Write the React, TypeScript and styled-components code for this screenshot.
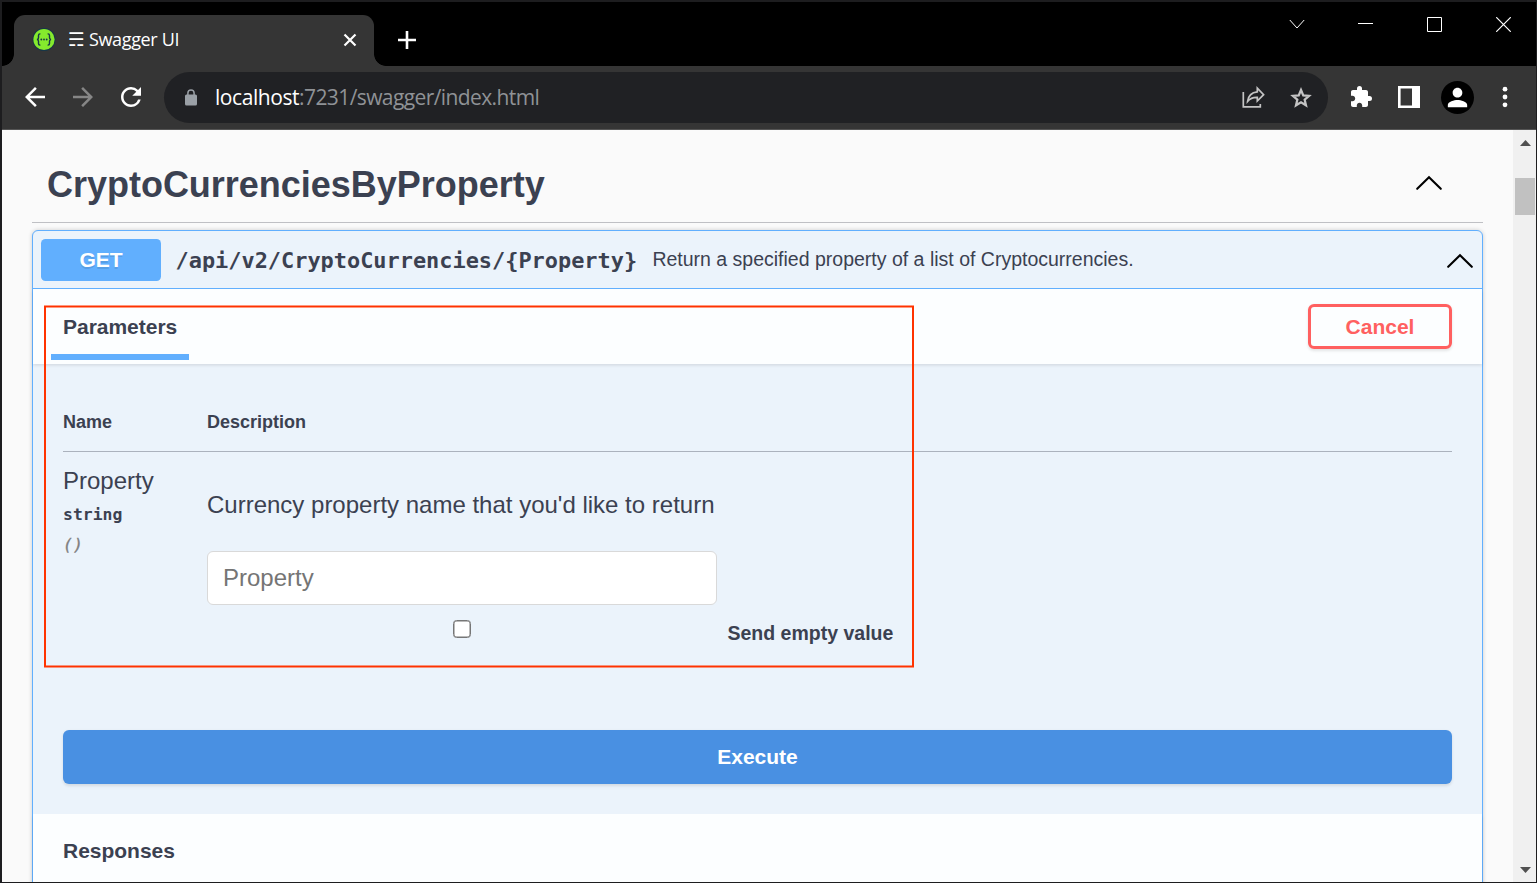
import React from "react";
import styled, { createGlobalStyle, css } from "styled-components";
import { MdArrowBack, MdArrowForward, MdExtension, MdPerson, MdRefresh } from "react-icons/md";

const GlobalStyle = createGlobalStyle`
  *, *::before, *::after { box-sizing: border-box; }
  body { margin: 0; background: #1d1d1d; font-family: "Liberation Sans", Arial, sans-serif; color: #3b4151; }
  svg { display: block; flex: none; }
`;

const Window = styled.div`
  width: 1537px;
  height: 883px;
  padding: 2px 1px 1px 2px;
  background: #1d1d1f;
  display: flex;
  flex-direction: column;
  overflow: hidden;
`;

/* Browser frame */

const TitleBar = styled.header`
  height: 64px;
  flex: none;
  display: flex;
  background: #000;
  color: #fff;
`;

const Tab = styled.div`
  position: relative;
  width: 360px;
  height: 51px;
  margin: 13px 0 0 12px;
  padding: 0 16px 1px 18px;
  border-radius: 11px 11px 0 0;
  background: #353535;
  display: flex;
  align-items: center;

  &::before,
  &::after {
    content: "";
    position: absolute;
    bottom: 0;
    width: 12px;
    height: 12px;
  }
  &::before {
    left: -12px;
    background: radial-gradient(circle at 0 0, #000 11.5px, #353535 12.2px);
  }
  &::after {
    right: -12px;
    background: radial-gradient(circle at 100% 0, #000 11.5px, #353535 12.2px);
  }
`;

const TabTitle = styled.span`
  display: flex;
  align-items: center;
  flex: 1;
  margin-left: 12px;
  padding-bottom: 2px;
  font: 18px/24px "Open Sans", "Noto Sans", sans-serif;
  letter-spacing: -0.35px;
  white-space: nowrap;
`;

const Trigram = styled.span`
  width: 21px;
  font: 19px/24px "DejaVu Sans", sans-serif;
  letter-spacing: 0;
`;

const NewTab = styled.div`
  margin: 29px 0 0 24px;
`;

const WindowControls = styled.div`
  display: flex;
  height: 44px;
  margin-left: auto;
  margin-right: -2px;
`;

const ControlSlot = styled.div`
  width: 69px;
  display: flex;
  align-items: center;
  justify-content: center;
`;

const Toolbar = styled.nav`
  height: 64px;
  flex: none;
  display: flex;
  align-items: center;
  padding: 0 7px 1px 9px;
  background: #353535;
  border-bottom: 1px solid #555;
  color: #fff;
`;

const ToolSlot = styled.div<{ $color?: string }>`
  width: 48px;
  flex: none;
  display: flex;
  align-items: center;
  justify-content: center;
  color: ${(p) => p.$color ?? "#fff"};
`;

const AddressBar = styled.div`
  flex: 1;
  height: 51px;
  margin: 1px 9px 0;
  padding: 0 3px 0 21px;
  border-radius: 26px;
  background: #202124;
  display: flex;
  align-items: center;
`;

const Url = styled.span`
  flex: 1;
  margin-left: 18px;
  padding-bottom: 1px;
  font: 21px/30px "Open Sans", "Noto Sans", sans-serif;
  letter-spacing: -0.6px;
  color: #8f9296;
  white-space: nowrap;
`;

const Host = styled.span`
  letter-spacing: -0.43px;
  color: #fff;
`;

const Avatar = styled.div`
  width: 33px;
  height: 33px;
  border-radius: 50%;
  background: #000;
  display: flex;
  align-items: center;
  justify-content: center;
`;

/* Page */

const Viewport = styled.div`
  flex: 1;
  min-height: 0;
  display: flex;
  background: #fafafa;
`;

const Page = styled.main`
  position: relative;
  flex: 1;
  min-width: 0;
  padding: 0 30px;
  overflow: hidden;
`;

const ScrollTrack = styled.div`
  width: 23px;
  flex: none;
  display: flex;
  flex-direction: column;
  align-items: center;
  padding: 10px 0 9px 1px;
  background: #f0f0f0;
`;

const ScrollThumb = styled.div`
  width: 20px;
  height: 37px;
  margin-top: 32px;
  margin-bottom: auto;
  background: #c1c1c1;
`;

const TagHeader = styled.div`
  height: 93px;
  padding: 16px 40px 0 15px;
  border-bottom: 1px solid #bfc0c4;
  display: flex;
  justify-content: space-between;
`;

const TagTitle = styled.h3`
  margin: 0;
  font-size: 36px;
  line-height: 78px;
  letter-spacing: -0.02px;
  white-space: nowrap;
`;

const OperationBlock = styled.section`
  height: 700px;
  margin-top: 7px;
  border: 1px solid #61affe;
  border-radius: 6px;
  background: #ebf3fb;
  box-shadow: 0 0 4.5px rgba(0, 0, 0, 0.19);
`;

const Summary = styled.div`
  height: 58px;
  padding: 0 8px;
  border-bottom: 1px solid #61affe;
  display: flex;
  align-items: center;
  white-space: nowrap;
`;

const Method = styled.span`
  width: 120px;
  height: 42px;
  border-radius: 4.5px;
  background: #61affe;
  color: #fff;
  font-weight: 700;
  font-size: 21px;
  line-height: 41px;
  text-align: center;
  text-shadow: 0 1.5px 0 rgba(0, 0, 0, 0.1);
`;

const Path = styled.span`
  width: 476px;
  padding: 3px 0 0 14.5px;
  font: 700 21.92px/30px "DejaVu Sans Mono", monospace;
`;

const SummaryText = styled.span`
  flex: 1;
  padding: 0 0 2px 15.4px;
  font-size: 19.5px;
  line-height: 30px;
`;

const SectionHeader = styled.div<{ $height: number }>`
  height: ${(p) => p.$height}px;
  padding: 0 30px;
  display: flex;
  align-items: center;
  justify-content: space-between;
  background: rgba(255, 255, 255, 0.86);
  box-shadow: 0 1.5px 3px rgba(0, 0, 0, 0.1);
`;

const SectionTitle = styled.h4<{ $active?: boolean }>`
  position: relative;
  margin: 0;
  font-size: 21px;
  line-height: 30px;
  letter-spacing: -0.02px;

  ${(p) =>
    p.$active &&
    css`
      &::after {
        content: "";
        position: absolute;
        left: -12px;
        right: -12px;
        bottom: -18px;
        height: 6px;
        background: #61affe;
      }
    `}
`;

const buttonText = css`
  font-family: inherit;
  font-weight: 700;
  font-size: 21px;
  padding: 0;
`;

const CancelButton = styled.button`
  ${buttonText}
  width: 144px;
  height: 45px;
  border: 3px solid #ff6060;
  border-radius: 6px;
  background: transparent;
  color: #ff6060;
  box-shadow: 0 1.5px 3px rgba(0, 0, 0, 0.1);
`;

const ExecuteButton = styled.button`
  ${buttonText}
  width: 100%;
  height: 54px;
  margin-top: 61px;
  border: 0;
  border-radius: 6px;
  background: #4990e2;
  color: #fff;
  box-shadow: 0 1.5px 3px rgba(0, 0, 0, 0.1);
`;

const OperationBody = styled.div`
  height: 450px;
  padding: 0 30px;
`;

const TableRow = styled.div`
  display: grid;
  grid-template-columns: 144px 1fr;
`;

const TableHead = styled(TableRow)`
  height: 88px;
  padding-top: 43px;
  border-bottom: 1px solid #abb2bd;
  font-weight: 700;
  font-size: 18px;
  line-height: 30px;
`;

const ParameterRow = styled(TableRow)`
  height: 217px;
`;

const NameCell = styled.div`
  padding-top: 14px;
`;

const ParamName = styled.div`
  font-size: 24px;
  line-height: 30px;
`;

const ParamType = styled.div`
  margin-top: 4px;
  font: 700 16.45px/30px "DejaVu Sans Mono", monospace;
`;

const ParamFormat = styled.div`
  font: italic 16.45px/30px "DejaVu Sans Mono", monospace;
  color: #808080;
  -webkit-text-stroke: 0.3px #808080;
`;

const DescriptionCell = styled.div`
  padding-top: 38px;
`;

const ParamDescription = styled.p`
  margin: 0 0 31px;
  font-size: 24px;
  line-height: 30px;
  white-space: nowrap;
`;

const ParamInput = styled.input`
  display: block;
  width: 510px;
  height: 54px;
  padding: 0 15px;
  border: 1px solid #d9d9d9;
  border-radius: 6px;
  background: #fff;
  font: 24px "Liberation Sans", Arial, sans-serif;
  color: #3b4151;
  outline: none;

  &::placeholder {
    color: #757575;
    opacity: 1;
  }
`;

const EmptyValueRow = styled.label`
  display: flex;
  align-items: flex-start;
  margin-top: 13px;
  font-weight: 700;
  font-size: 19.5px;
  line-height: 30px;
  white-space: nowrap;
`;

const CheckboxColumn = styled.span`
  width: 520.5px;
  padding: 2px 11px 0 0;
  display: flex;
  justify-content: center;
`;

const Checkbox = styled.input`
  appearance: none;
  width: 18px;
  height: 18px;
  margin: 0;
  border: 1px solid #767676;
  border-radius: 3.5px;
  background: #fff;
  box-shadow: inset 0 0 0 0.5px #767676;
`;

const Highlight = styled.svg`
  position: absolute;
  left: 42px;
  top: 175px;
  pointer-events: none;
`;

const SwaggerLogo = () => (
  <svg width="24" height="24" viewBox="0 0.5 24 24">
    <circle cx="12" cy="12" r="11.5" fill="#173647" />
    <circle cx="12" cy="12" r="10.6" fill="#85ea2d" />
    <g fill="none" stroke="#173647" strokeWidth="1.4">
      <path d="M8.4 6.4H8q-1.5 0-1.5 1.5v2.3q0 1.6-1.5 1.8 1.5 .2 1.5 1.8v2.3q0 1.5 1.5 1.5h.4" />
      <path d="M15.6 6.4h.4q1.5 0 1.5 1.5v2.3q0 1.6 1.5 1.8-1.5 .2-1.5 1.8v2.3q0 1.5-1.5 1.5h-.4" />
    </g>
    <g fill="#173647">
      <circle cx="9.3" cy="12" r=".9" />
      <circle cx="12" cy="12" r=".9" />
      <circle cx="14.7" cy="12" r=".9" />
    </g>
  </svg>
);

const LockIcon = () => (
  <svg width="12" height="17" viewBox="0 0 12 17" fill="#9aa0a6">
    <path d="M1.5 5.5h9A1.5 1.5 0 0 1 12 7v8a1.5 1.5 0 0 1-1.5 1.5h-9A1.5 1.5 0 0 1 0 15V7a1.5 1.5 0 0 1 1.5-1.5z" />
    <path d="M2.9 6V4a3.1 3.1 0 0 1 6.2 0v2" fill="none" stroke="#9aa0a6" strokeWidth="1.5" />
  </svg>
);

const ShareIcon = () => (
  <svg width="24" height="24" viewBox="-.7 0 24 24" fill="none" stroke="currentColor" strokeWidth="1.7">
    <path d="M1.6 6v14.9h17V18" />
    <path d="M15.6 2.2l6.3 6.5-6.3 6.3v-3.6c-4.3-.2-7.2 1-9.7 4 .6-5.4 4-9 9.7-9.6z" />
  </svg>
);

const StarIcon = () => (
  <svg width="26" height="26" viewBox="0 0 24 24" fill="none" stroke="currentColor" strokeWidth="2.1">
    <path d="M12 4.6l2.1 4.95 5.35.46-4.06 3.52 1.22 5.24L12 16l-4.61 2.77 1.22-5.24-4.06-3.52 5.35-.46z" />
  </svg>
);

const SidePanelIcon = () => (
  <svg width="22" height="22" viewBox="0 0 22 22">
    <path d="M1.3 1.3h19.4v19.4H1.3z" fill="none" stroke="currentColor" strokeWidth="2.6" />
    <path d="M14 1h7v20h-7z" fill="currentColor" />
  </svg>
);

const MoreIcon = () => (
  <svg width="6" height="22" viewBox="0 0 6 22" fill="currentColor">
    <circle cx="3" cy="3.2" r="2.4" />
    <circle cx="3" cy="11" r="2.4" />
    <circle cx="3" cy="18.8" r="2.4" />
  </svg>
);

const CollapseArrow = () => (
  <svg width="28" height="16" viewBox="0 0 28 16" fill="none" stroke="#000" strokeWidth="2.1" strokeLinecap="round">
    <path d="M2.2 13.8L14 2.2l11.8 11.6" />
  </svg>
);

const ScrollArrow = ({ down = false }: { down?: boolean }) => (
  <svg width="11" height="6" viewBox="0 0 11 6" fill="#505050">
    <path d={down ? "M0 0h11L5.5 6z" : "M0 6h11L5.5 0z"} />
  </svg>
);

const SummaryToggle = styled.span`
  padding-top: 2px;
`;

const TagToggle = styled.span`
  padding-top: 29px;
`;

export default function App() {
  return (
    <>
      <GlobalStyle />
      <Window>
        <TitleBar>
          <Tab>
            <SwaggerLogo />
            <TabTitle>
              <Trigram>☴</Trigram>Swagger UI
            </TabTitle>
            <svg width="16" height="16" viewBox="0 0 16 16" stroke="#fff" strokeWidth="2.2">
              <path d="M2.5 2.5l11 11M13.5 2.5l-11 11" />
            </svg>
          </Tab>
          <NewTab>
            <svg width="18" height="18" viewBox="0 0 18 18" stroke="#fff" strokeWidth="2.6">
              <path d="M0 9h18M9 0v18" />
            </svg>
          </NewTab>
          <WindowControls>
            <ControlSlot>
              <svg width="16" height="10" viewBox="0 0 16 10" fill="none" stroke="#fff">
                <path d="M.8 1L8 9l7.2-8" />
              </svg>
            </ControlSlot>
            <ControlSlot>
              <svg width="15" height="3" viewBox="0 0 15 3" fill="#fff">
                <path d="M0 0h15v1H0z" />
              </svg>
            </ControlSlot>
            <ControlSlot>
              <svg width="15" height="15" viewBox="0 0 15 15" fill="none" stroke="#fff">
                <path d="M.5 .5h14v14H.5z" />
              </svg>
            </ControlSlot>
            <ControlSlot>
              <svg width="15" height="15" viewBox="0 0 15 15" stroke="#fff" strokeWidth="1.2">
                <path d="M.2 .2l14.6 14.6M14.8 .2L.2 14.8" />
              </svg>
            </ControlSlot>
          </WindowControls>
        </TitleBar>

        <Toolbar>
          <ToolSlot>
            <MdArrowBack size={30} />
          </ToolSlot>
          <ToolSlot $color="#868686">
            <MdArrowForward size={30} />
          </ToolSlot>
          <ToolSlot>
            <MdRefresh size={30} />
          </ToolSlot>
          <AddressBar>
            <LockIcon />
            <Url>
              <Host>localhost</Host>:7231/swagger/index.html
            </Url>
            <ToolSlot $color="#c4c4c4">
              <ShareIcon />
            </ToolSlot>
            <ToolSlot $color="#c4c4c4">
              <StarIcon />
            </ToolSlot>
          </AddressBar>
          <ToolSlot>
            <MdExtension size={24} />
          </ToolSlot>
          <ToolSlot>
            <SidePanelIcon />
          </ToolSlot>
          <ToolSlot>
            <Avatar>
              <MdPerson size={29} />
            </Avatar>
          </ToolSlot>
          <ToolSlot>
            <MoreIcon />
          </ToolSlot>
        </Toolbar>

        <Viewport>
          <Page>
            <TagHeader>
              <TagTitle>CryptoCurrenciesByProperty</TagTitle>
              <TagToggle>
                <CollapseArrow />
              </TagToggle>
            </TagHeader>

            <OperationBlock>
              <Summary>
                <Method>GET</Method>
                <Path>{"/api/v2/CryptoCurrencies/{Property}"}</Path>
                <SummaryText>Return a specified property of a list of Cryptocurrencies.</SummaryText>
                <SummaryToggle>
                  <CollapseArrow />
                </SummaryToggle>
              </Summary>

              <SectionHeader $height={75}>
                <SectionTitle $active>Parameters</SectionTitle>
                <CancelButton>Cancel</CancelButton>
              </SectionHeader>

              <OperationBody>
                <TableHead>
                  <span>Name</span>
                  <span>Description</span>
                </TableHead>
                <ParameterRow>
                  <NameCell>
                    <ParamName>Property</ParamName>
                    <ParamType>string</ParamType>
                    <ParamFormat>()</ParamFormat>
                  </NameCell>
                  <DescriptionCell>
                    <ParamDescription>Currency property name that you'd like to return</ParamDescription>
                    <ParamInput placeholder="Property" />
                    <EmptyValueRow>
                      <CheckboxColumn>
                        <Checkbox type="checkbox" />
                      </CheckboxColumn>
                      Send empty value
                    </EmptyValueRow>
                  </DescriptionCell>
                </ParameterRow>
                <ExecuteButton>Execute</ExecuteButton>
              </OperationBody>

              <SectionHeader $height={74}>
                <SectionTitle>Responses</SectionTitle>
              </SectionHeader>
            </OperationBlock>
            <Highlight width="870" height="363" viewBox="0 0 870 363">
              <rect x="1" y="1.5" width="868" height="360" fill="none" stroke="#ff3300" strokeWidth="2" />
            </Highlight>
          </Page>

          <ScrollTrack>
            <ScrollArrow />
            <ScrollThumb />
            <ScrollArrow down />
          </ScrollTrack>
        </Viewport>
      </Window>
    </>
  );
}
